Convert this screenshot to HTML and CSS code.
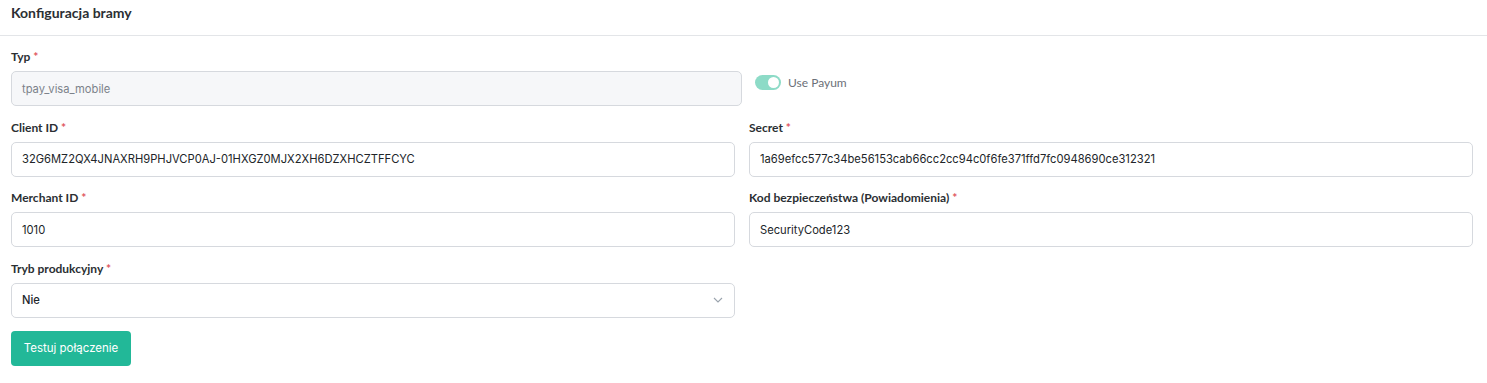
FILE: index.html
```html
<!DOCTYPE html>
<html lang="pl">
<head>
<meta charset="utf-8">
<title>Konfiguracja bramy</title>
<link rel="stylesheet" href="styles.css">
</head>
<body>
<div class="card">
  <div class="card-header">Konfiguracja bramy</div>
  <div class="card-body">
    <div class="row row-typ">
      <div class="field">
        <label class="label">Typ <span class="req">*</span></label>
        <div class="input disabled">tpay_visa_mobile</div>
      </div>
      <div class="toggle-wrap">
        <span class="toggle"><span class="knob"></span></span>
        <span class="toggle-label">Use Payum</span>
      </div>
    </div>
    <div class="row">
      <div class="field">
        <label class="label">Client ID <span class="req">*</span></label>
        <div class="input">32G6MZ2QX4JNAXRH9PHJVCP0AJ-01HXGZ0MJX2XH6DZXHCZTFFCYC</div>
      </div>
      <div class="field">
        <label class="label">Secret <span class="req">*</span></label>
        <div class="input">1a69efcc577c34be56153cab66cc2cc94c0f6fe371ffd7fc0948690ce312321</div>
      </div>
    </div>
    <div class="row">
      <div class="field">
        <label class="label">Merchant ID <span class="req">*</span></label>
        <div class="input">1010</div>
      </div>
      <div class="field">
        <label class="label">Kod bezpieczeństwa (Powiadomienia) <span class="req">*</span></label>
        <div class="input">SecurityCode123</div>
      </div>
    </div>
    <div class="row">
      <div class="field">
        <label class="label">Tryb produkcyjny <span class="req">*</span></label>
        <div class="input select"><span>Nie</span>
          <svg class="chev" width="10" height="6" viewBox="0 0 10 6"><path d="M1 1l4 4 4-4" fill="none" stroke="#9aa3ad" stroke-width="1.1"/></svg>
        </div>
      </div>
      <div></div>
    </div>
    <button class="btn">Testuj połączenie</button>
  </div>
</div>
</body>
</html>
```

FILE: styles.css
```css
* { box-sizing: border-box; }
html, body { margin: 0; padding: 0; background: #fff; }
body { font-family: "Inter", "Liberation Sans", sans-serif; color: #212529; }

.card { width: 1487px; }
.card-header {
  font-family: "Lato", "Inter", sans-serif;
  font-weight: 700;
  font-size: 14px;
  color: #2b2f33;
  padding: 4px 11px 0;
  height: 36px;
  border-bottom: 1px solid #e3e5e8;
}
.card-body { padding: 15px 14px 0 11px; }

.row {
  display: grid;
  grid-template-columns: 724px 724px;
  column-gap: 14px;
  margin-bottom: 15.6px;
}
.row-typ { grid-template-columns: 731px 1fr; column-gap: 13px; }

.field { display: flex; flex-direction: column; }
.label {
  font-family: "Lato", "Inter", sans-serif;
  font-weight: 700;
  font-size: 12px;
  color: #2b2f33;
  line-height: 12px;
  margin-bottom: 8px;
}
.req { color: #e0545c; }

.input {
  height: 35px;
  border: 1px solid #d6d9de;
  border-radius: 5px;
  padding: 0 10px;
  display: flex;
  align-items: center;
  font-size: 11.2px;
  color: #212529;
  background: #fff;
  white-space: nowrap;
}
.input.disabled { background: #f6f7f9; color: #7c828a; }
.input.select { justify-content: space-between; padding-right: 11px; font-weight: 500; }
.chev { display: block; }

.toggle-wrap {
  display: flex;
  align-items: center;
  gap: 7px;
  padding-top: 24px;
  align-self: start;
}
.toggle {
  width: 26px;
  height: 15px;
  border-radius: 8px;
  background: #8ddbc7;
  position: relative;
  display: inline-block;
}
.knob {
  position: absolute;
  right: 2px;
  top: 2px;
  width: 11px;
  height: 11px;
  border-radius: 50%;
  background: #fff;
}
.toggle-label {
  font-family: "Lato", "Inter", sans-serif;
  font-size: 12px;
  color: #6b7078;
}

.btn {
  margin-top: -2.5px;
  width: 120px;
  height: 35px;
  border: none;
  border-radius: 4px;
  background: #22b898;
  color: #fff;
  font-family: "Inter", sans-serif;
  font-size: 11.5px;
  font-weight: 400;
}
```
